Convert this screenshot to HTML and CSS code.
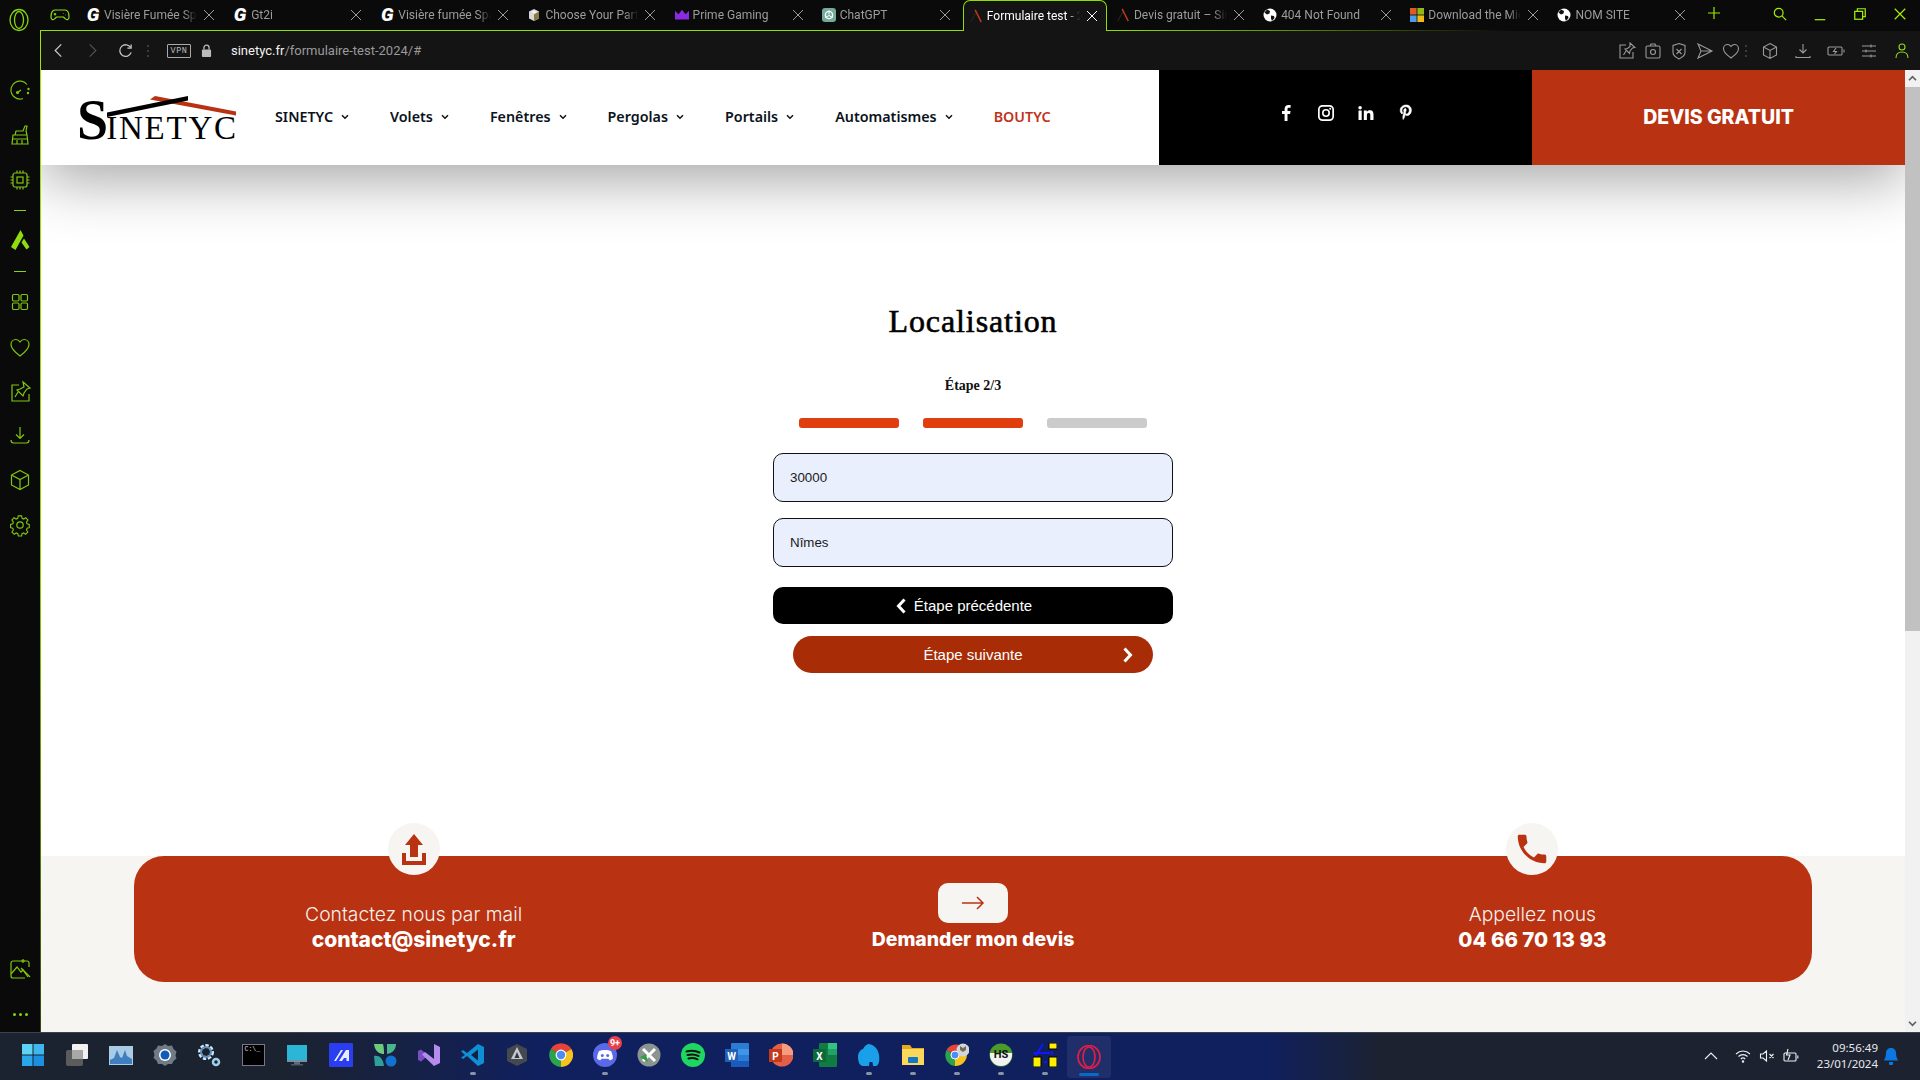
FILE: index.html
```html
<!DOCTYPE html>
<html lang="fr">
<head>
<meta charset="utf-8">
<title>Formulaire test 2024 - Sinetyc</title>
<link rel="stylesheet" href="styles.css">
</head>
<body>
<svg class="defs" width="0" height="0" aria-hidden="true">
  <symbol id="x" viewBox="0 0 12 12"><path d="M1 1l10 10M11 1L1 11" fill="none" stroke="currentColor" stroke-width="1"/></symbol>
  <symbol id="roof" viewBox="0 0 16 16"><path d="M2 15L9 2" stroke="#222" stroke-width="1.5" fill="none"/><path d="M7 1l7 14" stroke="#c5391a" stroke-width="1.6" fill="none"/></symbol>
  <symbol id="globe" viewBox="0 0 14 14"><circle cx="7" cy="7" r="6.5" fill="#fff"/><path d="M4 1.5l3 1.5-.5 2.5-2.5 1-2.5-2zM8 7.5l3 .5.5 2-2.5 3-1-2.5z" fill="#111"/></symbol>
  <symbol id="nav-chev" viewBox="0 0 8 6"><path d="M1 1.2l3 3 3-3" fill="none" stroke="currentColor" stroke-width="1.5"/></symbol>
</svg>
<div class="window">
  <div class="upper">
    <aside class="side">
      <svg class="side-logo" viewBox="0 0 24 24"><ellipse cx="12" cy="12" rx="9" ry="10.5"/><ellipse cx="12" cy="12" rx="4.5" ry="8.5"/></svg>
      <div class="side-list">
        <svg class="ic" viewBox="0 0 24 24"><path d="M19 6.500A9 9 0 1 0 15 20.500"/><path d="M9 15l4-3"/><circle cx="9.500" cy="14.500" r="1"/><circle cx="20.500" cy="11" r=".6"/><circle cx="20" cy="15" r=".6"/></svg>
        <svg class="ic" viewBox="0 0 24 24"><path d="M5 12h14l1 9H4zM7 12l1-4h7l2-5h2l-1 5 1 4M9 21v-4M14 21v-4M4.500 16h15"/></svg>
        <svg class="ic" viewBox="0 0 24 24"><rect x="5" y="5" width="14" height="14" rx="2"/><rect x="9" y="9" width="6" height="6"/><path d="M9 2.500V5M12 2.500V5M15 2.500V5M9 19v2.500M12 19v2.500M15 19v2.500M2.500 9H5M2.500 12H5M2.500 15H5M19 9h2.500M19 12h2.500M19 15h2.500"/></svg>
        <span class="side-dash side-dash-a"></span>
        <svg class="ic ic-fill" viewBox="0 0 24 24"><path d="M12.500 2l3 5.500-8 14.500-4.500-3zM16 10.500l5.500 8.500-3 2.500-5-7z"/></svg>
        <span class="side-dash side-dash-b"></span>
        <svg class="ic" viewBox="0 0 24 24"><rect x="4.500" y="4.500" width="6.500" height="6.500" rx="1.200"/><rect x="13" y="4.500" width="6.500" height="6.500" rx="1.200"/><rect x="4.500" y="13" width="6.500" height="6.500" rx="1.200"/><rect x="13" y="13" width="6.500" height="6.500" rx="1.200"/></svg>
        <svg class="ic" viewBox="0 0 24 24"><path d="M12 21C6 16.500 3 13.500 3 9.500 3 6.500 5.300 4.500 7.800 4.500c1.800 0 3.200 1 4.200 2.500 1-1.500 2.400-2.500 4.200-2.500 2.500 0 4.800 2 4.800 5 0 4-3 7-9 11.500z"/></svg>
        <svg class="ic" viewBox="0 0 24 24"><path d="M11 5H4v16h17v-7"/><path d="M15 2l7 6-3 1-3 4-1 3-6-6 3-1 4-2zM10 12l-3 5"/></svg>
        <svg class="ic ic-dl" viewBox="0 0 24 24"><path d="M12 4v11M8 11.500l4 4 4-4M3 17c0 2 1 3 2.500 3h13c1.500 0 2.500-1 2.500-3"/></svg>
        <svg class="ic" viewBox="0 0 24 24"><path d="M12 2.500l8.500 4.500v10L12 21.500 3.500 17V7zM3.500 7l8.500 4.500L20.500 7M12 11.500v10"/></svg>
        <svg class="ic" viewBox="0 0 24 24"><circle cx="12" cy="12" r="3.200"/><path d="M10.200 3.500h3.600l.5 2.600 1.700.8 2.300-1.400 2.300 2.600-1.600 2.100.6 1.800 2.400.8v3.400l-2.400.7-.6 1.800 1.500 2.100-2.400 2.500-2.200-1.400-1.700.7-.4 2.500h-3.600l-.5-2.500-1.700-.7-2.200 1.400-2.400-2.500 1.500-2.100-.6-1.800-2.400-.7v-3.400l2.400-.8.6-1.800-1.600-2.100 2.300-2.600 2.300 1.400 1.700-.8z" transform="translate(.8 -.4) scale(.93)"/></svg>
      </div>
      <div class="side-foot">
        <svg class="ic" viewBox="0 0 24 24"><path d="M21 10V6a2 2 0 0 0-2-2H5a2 2 0 0 0-2 2v13a2 2 0 0 0 2 2h12"/><path d="M3 17l6-7 4 5 2-2 5 7"/><path d="M13 11l9 9"/><path d="M15 2v4M13 4h4"/></svg>
        <div class="side-dots"><i></i><i></i><i></i></div>
      </div>
    </aside>
    <div class="browser">
      <div class="tabbar">
        <svg class="game" viewBox="0 0 20 14"><path d="M5 2h10c2.500 0 4 3 4 7 0 3-2.500 3.500-4 1.500L13.500 9h-7L5 10.500C3.500 12.500 1 12 1 9c0-4 1.500-7 4-7z"/><path d="M5 5v2.500M3.800 6.200h2.400M13 5.500h.5M15 7h.5"/></svg>
        <div class="tab"><span class="fav-g">G</span><span class="tab-title">Visière Fumée Spa</span><svg class="tab-x"><use href="#x"/></svg></div>
        <div class="tab"><span class="fav-g">G</span><span class="tab-title">Gt2i</span><svg class="tab-x"><use href="#x"/></svg></div>
        <div class="tab"><span class="fav-g">G</span><span class="tab-title">Visière fumée Spa</span><svg class="tab-x"><use href="#x"/></svg></div>
        <div class="tab"><svg class="fav" viewBox="0 0 14 14"><path d="M7 1l5 2.500v7L7 13l-5-2.500v-7z" fill="#d8d8d8"/><path d="M7 6.500l5-3v7L7 13z" fill="#8a7a45"/><path d="M4 4l3-1.500L10 4 7 5.500z" fill="#f4f4f4"/></svg><span class="tab-title">Choose Your Parts</span><svg class="tab-x"><use href="#x"/></svg></div>
        <div class="tab"><svg class="fav" viewBox="0 0 16 14"><path d="M0 2l4 4 4-5 4 5 4-4v10H0z" fill="#8a2be2"/></svg><span class="tab-title">Prime Gaming</span><svg class="tab-x"><use href="#x"/></svg></div>
        <div class="tab"><svg class="fav" viewBox="0 0 14 14"><rect width="14" height="14" rx="3" fill="#74aa9c"/><circle cx="7" cy="7" r="3.600" fill="none" stroke="#fff" stroke-width="1.400"/><path d="M7 2.500v4M3.500 9.500L7 7.500l3.500 2" stroke="#fff" fill="none"/></svg><span class="tab-title">ChatGPT</span><svg class="tab-x"><use href="#x"/></svg></div>
        <div class="tab tab-active"><svg class="fav"><use href="#roof"/></svg><span class="tab-title">Formulaire test - 2024</span><svg class="tab-x"><use href="#x"/></svg></div>
        <div class="tab"><svg class="fav"><use href="#roof"/></svg><span class="tab-title">Devis gratuit – Sinetyc</span><svg class="tab-x"><use href="#x"/></svg></div>
        <div class="tab"><svg class="fav"><use href="#globe"/></svg><span class="tab-title">404 Not Found</span><svg class="tab-x"><use href="#x"/></svg></div>
        <div class="tab"><svg class="fav" viewBox="0 0 14 14"><rect width="6.600" height="6.600" fill="#e05a24"/><rect x="7.400" width="6.600" height="6.600" fill="#8fb81a"/><rect y="7.400" width="6.600" height="6.600" fill="#4a9cf0"/><rect x="7.400" y="7.400" width="6.600" height="6.600" fill="#f2bb13"/></svg><span class="tab-title">Download the Microsoft</span><svg class="tab-x"><use href="#x"/></svg></div>
        <div class="tab"><svg class="fav"><use href="#globe"/></svg><span class="tab-title">NOM SITE</span><svg class="tab-x"><use href="#x"/></svg></div>
        <svg class="newtab" viewBox="0 0 12 12"><path d="M6 0v12M0 6h12"/></svg>
        <div class="winctl">
          <svg viewBox="0 0 16 16"><circle cx="6.500" cy="6.500" r="5"/><path d="M10.200 10.200L15 15"/></svg>
          <svg viewBox="0 0 16 16"><path d="M2 14.500h12"/></svg>
          <svg viewBox="0 0 16 16"><rect x="2" y="5" width="9" height="9"/><path d="M5 5V2h9v9h-3"/></svg>
          <svg viewBox="0 0 16 16"><path d="M2 2l12 12M14 2L2 14"/></svg>
        </div>
      </div>
      <div class="frame">
        <div class="addr">
          <svg class="nav-ic nav-back" viewBox="0 0 10 16"><path d="M8.500 1.500L2 8l6.500 6.500"/></svg>
          <svg class="nav-ic nav-fwd" viewBox="0 0 10 16"><path d="M1.500 1.500L8 8l-6.500 6.500"/></svg>
          <svg class="nav-ic nav-reload" viewBox="0 0 16 16"><path d="M13.500 5A6.200 6.200 0 1 0 14 10"/><path d="M14 1.500V5.500h-4"/></svg>
          <span class="addr-dots"></span>
          <span class="vpn">VPN</span>
          <svg class="lock" viewBox="0 0 12 14"><rect x="1" y="6" width="10" height="8" rx="1" fill="#bbb"/><path d="M3.200 6V4a2.800 2.800 0 0 1 5.600 0v2" fill="none" stroke="#bbb" stroke-width="1.400"/></svg>
          <span class="url"><b>sinetyc.fr</b>/formulaire-test-2024/#</span>
          <div class="addr-tools">
            <svg viewBox="0 0 18 18"><path d="M8 3H2v13h13v-6"/><path d="M12 1l5 4.500-2.500.5-2.500 3-.5 2.500-4.500-4.500 2.500-.5 2.500-2zM8 9l-2.500 4"/></svg>
            <svg viewBox="0 0 18 18"><rect x="2" y="4" width="14" height="12" rx="1.500"/><path d="M6 4l1-2h4l1 2"/><circle cx="9" cy="10" r="2.500"/></svg>
            <svg viewBox="0 0 18 18"><path d="M9 1.500l6 2v7c0 3-3 5-6 6.500-3-1.500-6-3.500-6-6.500v-7z"/><path d="M6.500 7l5 5M11.500 7l-5 5"/></svg>
            <svg viewBox="0 0 18 18"><path d="M2 2l14 7-14 7 3-7zM5 9h11"/></svg>
            <svg viewBox="0 0 18 18"><path d="M9 16C4 12 1.500 10 1.500 6.500 1.500 4 3.500 2.500 5.500 2.500 7 2.500 8.200 3.300 9 4.500c.8-1.200 2-2 3.500-2 2 0 4 1.500 4 4C16.500 10 14 12 9 16z"/></svg>
            <span class="addr-dots addr-dots-r"></span>
            <svg class="tool-wide" viewBox="0 0 18 18"><path d="M9 1.500l6.500 3.500v8L9 16.500 2.500 13V5zM2.500 5L9 8.500 15.500 5M9 8.500v8"/></svg>
            <svg class="tool-wide" viewBox="0 0 18 18"><path d="M9 2v9M5.500 7.500L9 11l3.500-3.500M2 14v1.500h14V14"/></svg>
            <svg class="tool-wide" viewBox="0 0 18 18"><rect x="1" y="5" width="14" height="8" rx="1"/><path d="M17 7.500v3M9 6L6.500 9.500h3L7.500 12"/></svg>
            <svg class="tool-wide" viewBox="0 0 18 18"><path d="M2 4h14M2 9h14M2 14h14M11 2.500v3M6 7.500v3M11 12.500v3"/></svg>
            <svg class="tool-wide tool-user" viewBox="0 0 18 18"><circle cx="9" cy="5" r="3"/><path d="M3 16c0-4 2.500-6 6-6s6 2 6 6"/></svg>
          </div>
        </div>
        <div class="content">
          <div class="page">
            <header class="site-header">
              <div class="brand">
                <a class="logo"><span class="logo-s">S</span><span class="logo-rest">INETYC</span>
                  <svg class="logo-roof" viewBox="0 0 158 22"><path d="M77 0l81 15.500v4L72 3.500z" fill="#b93211"/><path d="M29 16.500L110 0v4.500L29 21z" fill="#000"/></svg>
                </a>
                <nav class="menu">
                  <a class="menu-item">SINETYC<svg class="chev"><use href="#nav-chev"/></svg></a>
                  <a class="menu-item">Volets<svg class="chev"><use href="#nav-chev"/></svg></a>
                  <a class="menu-item">Fenêtres<svg class="chev"><use href="#nav-chev"/></svg></a>
                  <a class="menu-item">Pergolas<svg class="chev"><use href="#nav-chev"/></svg></a>
                  <a class="menu-item">Portails<svg class="chev"><use href="#nav-chev"/></svg></a>
                  <a class="menu-item">Automatismes<svg class="chev"><use href="#nav-chev"/></svg></a>
                  <a class="menu-item menu-shop">BOUTYC</a>
                </nav>
              </div>
              <div class="social">
                <svg viewBox="0 0 18 18"><path d="M10.500 17V10h2.600l.4-3h-3V5.200c0-.9.3-1.400 1.500-1.400h1.600V1.100C13.300 1 12.400 1 11.500 1 9.200 1 7.600 2.400 7.600 4.900V7H5v3h2.600v7z"/></svg>
                <svg viewBox="0 0 18 18"><path fill-rule="evenodd" d="M5.500 1h7A4.500 4.500 0 0 1 17 5.500v7a4.500 4.500 0 0 1-4.500 4.500h-7A4.500 4.500 0 0 1 1 12.500v-7A4.500 4.500 0 0 1 5.500 1zm0 1.700A2.800 2.800 0 0 0 2.700 5.500v7a2.800 2.800 0 0 0 2.800 2.800h7a2.800 2.800 0 0 0 2.800-2.800v-7a2.800 2.800 0 0 0-2.800-2.800zM9 5a4 4 0 1 1 0 8 4 4 0 0 1 0-8zm0 1.600a2.400 2.400 0 1 0 0 4.800 2.400 2.400 0 0 0 0-4.800zM13.200 3.800a1 1 0 1 1 0 2 1 1 0 0 1 0-2z"/></svg>
                <svg viewBox="0 0 18 18"><path d="M1.500 6.500h3.200V16H1.500zM3.100 2a1.800 1.800 0 1 1 0 3.600 1.800 1.800 0 0 1 0-3.600zM6.800 6.500h3v1.300c.5-.9 1.600-1.600 3-1.600 3 0 3.700 2 3.700 4.700V16h-3.200v-4.500c0-1.200 0-2.600-1.600-2.600s-1.800 1.200-1.800 2.500V16H6.800z"/></svg>
                <svg viewBox="2 0 14 18"><path d="M9.300 1C5.300 1 3.200 3.600 3.200 6.400c0 1.300.7 3 1.800 3.500.2.100.3 0 .4-.2l.3-1c0-.2 0-.3-.1-.4-.4-.5-.7-1.200-.7-1.900 0-1.900 1.400-3.600 3.900-3.600 2.100 0 3.500 1.300 3.500 3.300 0 2.300-1.100 3.900-2.600 3.900-.8 0-1.400-.7-1.200-1.500.2-1 .7-2 .7-2.700 0-.7-.3-1.200-1-1.200-.8 0-1.500.9-1.500 2 0 .7.300 1.200.3 1.200l-1 4.200c-.3 1.200 0 3.200 0 3.400 0 .1.100.1.200 0 .1-.1 1.100-1.500 1.500-2.800l.5-2c.3.500 1 1 1.900 1 2.500 0 4.300-2.400 4.300-5.300C14.400 3 12.300 1 9.300 1z" stroke="#fff" stroke-width=".6"/></svg>
              </div>
              <a class="quote">DEVIS GRATUIT</a>
            </header>
            <main class="form-zone">
              <h1 class="form-title">Localisation</h1>
              <p class="form-step">Étape 2/3</p>
              <div class="bars"><span class="bar bar-on"></span><span class="bar bar-on"></span><span class="bar"></span></div>
              <div class="field">30000</div>
              <div class="field">Nîmes</div>
              <a class="btn btn-prev"><svg class="btn-chev" viewBox="0 0 10 16"><path d="M8.500 1.500L2.500 8l6 6.500"/></svg>Étape précédente</a>
              <a class="btn btn-next"><span></span><span>Étape suivante</span><svg class="btn-chev" viewBox="0 0 10 16"><path d="M1.500 1.500l6 6.500-6 6.500"/></svg></a>
            </main>
            <section class="cta-band">
              <div class="cta">
                <div class="cta-col">
                  <span class="cta-badge"><svg viewBox="0 0 26 32"><path d="M13 1l9 11h-5v12H9V12H4zM1 20h4v8h16v-8h4v12H1z"/></svg></span>
                  <span class="cta-light">Contactez nous par mail</span>
                  <strong class="cta-strong cta-mail">contact@sinetyc.fr</strong>
                </div>
                <div class="cta-col">
                  <span class="cta-arrow"><svg viewBox="0 0 24 14"><path d="M1 7h21M16 1l6 6-6 6"/></svg></span>
                  <strong class="cta-strong cta-quote">Demander mon devis</strong>
                </div>
                <div class="cta-col">
                  <span class="cta-badge"><svg viewBox="0 0 24 24"><path d="M6.620 10.790c1.440 2.830 3.760 5.140 6.590 6.590l2.200-2.200c.27-.27.67-.36 1.020-.24 1.120.37 2.330.57 3.570.57.55 0 1 .45 1 1V20c0 .55-.45 1-1 1-9.390 0-17-7.610-17-17 0-.55.45-1 1-1h3.500c.55 0 1 .45 1 1 0 1.250.2 2.450.57 3.570.11.350.03.740-.25 1.020l-2.200 2.200z"/></svg></span>
                  <span class="cta-light">Appellez nous</span>
                  <strong class="cta-strong cta-phone">04 66 70 13 93</strong>
                </div>
              </div>
            </section>
          </div>
          <div class="scrollbar">
            <span class="sb-btn"><svg viewBox="0 0 10 8"><path d="M1 6l4-4 4 4"/></svg></span>
            <span class="sb-thumb"></span>
            <span class="sb-btn sb-down"><svg viewBox="0 0 10 8"><path d="M1 2l4 4 4-4"/></svg></span>
          </div>
        </div>
      </div>
    </div>
  </div>
  <footer class="taskbar">
    <div class="task-list">
      <span class="task"><svg viewBox="0 0 24 24"><rect x="1" y="1" width="10.500" height="10.500" fill="#5ed3f5"/><rect x="12.500" y="1" width="10.500" height="10.500" fill="#3fb6ee"/><rect x="1" y="12.500" width="10.500" height="10.500" fill="#2aa6ea"/><rect x="12.500" y="12.500" width="10.500" height="10.500" fill="#1c8fe0"/></svg></span>
      <span class="task"><svg viewBox="0 0 24 24"><rect x="1" y="7" width="17" height="16" rx="2" fill="#5b5b5b"/><rect x="7" y="1" width="16" height="15" rx="1" fill="#f2f2f2"/><rect x="7" y="7" width="11" height="9" fill="#a8a8a8"/></svg></span>
      <span class="task"><svg viewBox="0 0 24 24"><rect y="3" width="24" height="19" fill="#a9cbe6"/><path d="M1 17l4-2 3-8 3 7 2 1 3-8 2 6 5 3v5H1z" fill="#3f7fc0"/></svg></span>
      <span class="task"><svg viewBox="0 0 24 24"><path d="M12 1l3 2 4-.5 1.500 3.500 3 2.500-1 4 1 3-3 2.500L19 21l-4 0-3 2-3-2-4 0-1.500-3.500L.5 15l1-3-1-4 3-2.500L5 2.500 9 3z" fill="#717b86"/><circle cx="12" cy="12" r="6" fill="#fff"/><circle cx="12" cy="12" r="4.500" fill="#0d5cb5"/></svg></span>
      <span class="task"><svg viewBox="0 0 24 24"><circle cx="9" cy="9" r="6" fill="none" stroke="#d8e8f4" stroke-width="4" stroke-dasharray="3 1.500"/><circle cx="9" cy="9" r="5" fill="none" stroke="#5a8fc0" stroke-width="2"/><circle cx="19" cy="19" r="3" fill="none" stroke="#9fd0e8" stroke-width="2.500"/></svg></span>
      <span class="task"><span class="term">C:\_</span></span>
      <span class="task"><svg viewBox="0 0 24 24"><rect x="2" y="2" width="20" height="15" fill="#2cb6d6"/><rect x="2" y="17" width="20" height="2" fill="#7a8da0"/><rect x="9" y="19" width="6" height="2" fill="#5a6a78"/><rect x="6" y="21" width="12" height="1.500" fill="#4a5a68"/></svg></span>
      <span class="task"><svg viewBox="0 0 24 24"><rect width="24" height="24" rx="1" fill="#2b3df0"/><path d="M5 18L12 7h2L7 18zM10 18l7-11h3v11h-2.500v-3H15l-2 3z" fill="#e8ecff"/></svg></span>
      <span class="task"><svg viewBox="0 0 24 24"><path d="M1 1h9c1 4 1 7 1 10-4 0-9-2-10-10z" fill="#6ecb7c"/><path d="M14 1h9c0 5-3 9-9 10z" fill="#49b58f"/><path d="M1 13c5-1 9 2 10 10H2z" fill="#2f9f9a"/><circle cx="18" cy="18" r="5.500" fill="#1272d0"/></svg></span>
      <span class="task"><svg viewBox="0 0 24 24"><path d="M1 8l3-1.500 7 6-7 6L1 17z" fill="#7c4ec4"/><path d="M17 1l6 3v16l-6 3-12-11.500L8 9l9 7z" fill="#b58bef"/></svg></span>
      <span class="task is-run"><svg viewBox="0 0 24 24"><path d="M17 1l6 3v16l-6 3-11-10-4 3-2-1.500L4 12 0 8.500 2 7l4 3z" fill="#0e8fd6"/><path d="M17 6.500L10 12l7 5.500z" fill="#12213f"/></svg></span>
      <span class="task"><svg viewBox="0 0 24 24"><path d="M12 1l10 5v12l-10 5L2 18V6z" fill="#44494e"/><path d="M12 4l-6 12h12z" fill="#c4cad0"/><path d="M12 9l-2.500 6h5z" fill="#33383d"/></svg></span>
      <span class="task"><svg viewBox="0 0 24 24"><path d="M12 12L1.800 6A12 12 0 0 1 22.400 6z" fill="#e6433a"/><path d="M12 12l10.400-6A12 12 0 0 1 12 24z" fill="#f7c31e"/><path d="M12 12v12A12 12 0 0 1 1.800 6z" fill="#2ba24c"/><circle cx="12" cy="12" r="5.400" fill="#fff"/><circle cx="12" cy="12" r="4.200" fill="#4a8df6"/></svg></span>
      <span class="task is-run"><svg viewBox="0 0 24 24"><circle cx="12" cy="12" r="12" fill="#5a68ea"/><path d="M6 8c3-1.500 9-1.500 12 0 1.500 3 2 5.500 1.800 8-1.500 1-2.500 1.300-3.300 1.300l-1-1.500H8.500l-1 1.500c-.8 0-1.800-.3-3.300-1.300C4 13.500 4.500 11 6 8z" fill="#fff"/><circle cx="9.300" cy="12.500" r="1.500" fill="#5a68ea"/><circle cx="14.700" cy="12.500" r="1.500" fill="#5a68ea"/></svg><span class="badge">9+</span></span>
      <span class="task"><svg viewBox="0 0 24 24"><circle cx="12" cy="12" r="11.500" fill="#8a9490"/><path d="M6 6l12 12M18 6L6 18" stroke="#fff" stroke-width="3"/><path d="M3 14l6-3 2 8z" fill="#2fa040"/></svg></span>
      <span class="task"><svg viewBox="0 0 24 24"><circle cx="12" cy="12" r="12" fill="#1ed760"/><path d="M5.500 8.500c4.500-1.300 9-1 13 1M6.500 12c3.800-1 7.500-.8 11 1M7.500 15.500c3-.8 6-.6 9 .8" fill="none" stroke="#111" stroke-width="2" stroke-linecap="round"/></svg></span>
      <span class="task"><svg viewBox="0 0 24 24"><rect x="6" width="18" height="24" rx="1" fill="#2b7cd3"/><rect x="6" y="6" width="18" height="6" fill="#3f96e8"/><rect x="6" y="18" width="18" height="6" fill="#185abd"/><rect y="6" width="13" height="13" fill="#1f5fb8"/><text class="ms-letter" x="6.500" y="16.500">W</text></svg></span>
      <span class="task"><svg viewBox="0 0 24 24"><circle cx="13" cy="12" r="11.500" fill="#e2604a"/><path d="M13 .5A11.500 11.500 0 0 1 24.500 12H13z" fill="#f49d7f"/><rect y="6" width="13" height="13" fill="#c4391b"/><text class="ms-letter" x="6.500" y="16.500">P</text></svg></span>
      <span class="task"><svg viewBox="0 0 24 24"><rect x="6" width="18" height="24" rx="1" fill="#107c41"/><rect x="15" width="9" height="6" fill="#33c481"/><rect x="15" y="6" width="9" height="6" fill="#21a366"/><rect x="15" y="12" width="9" height="6" fill="#107c41"/><rect y="6" width="13" height="13" fill="#0b6a38"/><text class="ms-letter" x="6.500" y="16.500">X</text></svg></span>
      <span class="task is-run"><svg viewBox="0 0 24 24"><path d="M11 1c5 0 10 4 11 11s-1 11-3 11h-3l-.5-4-3 0-.5 4H6c-3 0-5-4-5-9 0-4 2-7 5-8l2-3z" fill="#1aa0e8"/></svg></span>
      <span class="task is-run"><svg viewBox="0 0 24 24"><path d="M1 2h8l2 3h12v4H1z" fill="#e5a91f"/><rect x="1" y="6" width="22" height="16" fill="#fbd75b"/><rect x="7" y="14" width="10" height="6" rx="1" fill="#1478c8"/></svg></span>
      <span class="task is-run"><svg viewBox="0 0 24 24"><path d="M10 12L1.500 7A11 11 0 0 1 20 6z" fill="#e6433a"/><path d="M10 12l10-6A11 11 0 0 1 10 23z" fill="#f7c31e"/><path d="M10 12v11A11 11 0 0 1 1.500 7z" fill="#2ba24c"/><circle cx="10" cy="12" r="4" fill="#4a8df6" stroke="#fff"/><circle cx="18" cy="7" r="6.500" fill="#cfd6dc"/><path d="M15 3v4l3 2 3-2V3l-3 2z" fill="#776a55"/></svg></span>
      <span class="task is-run"><svg viewBox="0 0 24 24"><circle cx="12" cy="12" r="11.500" fill="#4c9a2a"/><path d="M1 10h22v2a11 11 0 0 1-22 0z" fill="#f2f2f2"/></svg><span class="hs">HS</span></span>
      <span class="task is-run"><svg viewBox="0 0 24 24"><rect y="14" width="8" height="10" fill="#ffee00" stroke="#000"/><rect x="16" y="14" width="8" height="10" fill="#ffee00" stroke="#000"/><rect x="16" y="0" width="8" height="6" fill="#ffee00" stroke="#000"/><path d="M1 10h16M3 12l7-11M11 19h3M19 8v4" stroke="#1414ff" stroke-width="2"/><circle cx="3" cy="11" r="1.500" fill="#1414ff"/></svg></span>
      <span class="task task-active"><svg viewBox="0 0 24 24"><ellipse cx="12" cy="12" rx="11" ry="11.500" fill="none" stroke="#e11d48" stroke-width="1.700"/><ellipse cx="12" cy="12" rx="6" ry="10" fill="none" stroke="#e11d48" stroke-width="1.700"/></svg></span>
    </div>
    <div class="tray">
      <svg class="tray-ic" viewBox="0 0 16 16"><path d="M2 11l6-6 6 6"/></svg>
      <svg class="tray-ic" viewBox="0 0 16 16"><path d="M1 6c4-4 10-4 14 0M3.500 8.500c2.500-2.500 6.500-2.500 9 0M5.800 11c1.200-1.200 3.200-1.200 4.400 0"/><circle cx="8" cy="13.500" r=".7"/></svg>
      <svg class="tray-ic" viewBox="0 0 16 16"><path d="M1.500 6v4H4l3.500 3V3L4 6zM10.500 6l4 4M14.500 6l-4 4"/></svg>
      <svg class="tray-ic" viewBox="0 0 16 16"><rect x="1" y="5" width="12" height="8" rx="1"/><path d="M14.800 7.500v3M5 1L3.500 7H7l-2 5" /></svg>
      <div class="clock"><span>09:56:49</span><span>23/01/2024</span></div>
      <svg class="bell" viewBox="0 0 16 18"><path d="M8 1c-3 0-5 2-5 5 0 4-1.500 6-2 7.500h14C14.500 12 13 10 13 6c0-3-2-5-5-5z"/><path d="M6 15h4v1.500a2 2 0 0 1-4 0z"/></svg>
    </div>
  </footer>
</div>
</body>
</html>
```
FILE: styles.css
```css
* { box-sizing: border-box; }
html, body { margin: 0; height: 100%; overflow: hidden; }
body { font-family: "Liberation Sans", Arial, sans-serif; background: #000; }
.defs { position: absolute; }
a { color: inherit; text-decoration: none; }

.window { width: 1920px; height: 1080px; display: grid; grid-template-rows: 1032px 48px; }
.upper { display: flex; min-height: 0; }

/* sidebar */
.side { width: 40px; flex: none; background: #0a0a0a; display: flex; flex-direction: column; align-items: center; padding: 8px 0 6px; }
.side-logo { width: 24px; height: 24px; fill: none; stroke: #86d40b; stroke-width: 1.300; margin-left: -2px; }
.side-list { display: flex; flex-direction: column; align-items: center; gap: 21px; margin-top: 46px; }
.ic { width: 24px; height: 24px; flex: none; fill: none; stroke: #7fc80c; stroke-width: 1.200; display: block; }
.ic-fill { fill: #8fdc10; stroke: none; }
.ic-dl { margin-top: -2px; }
.side-dash { width: 12px; height: 1px; background: #86d40b; }
.side-dash-a { margin: -3px 0 -4px; }
.side-dash-b { margin: -2px 0 -3px; }
.side-foot { margin-top: auto; display: flex; flex-direction: column; align-items: center; gap: 21px; }
.side-dots { height: 24px; display: flex; align-items: center; gap: 3px; }
.side-dots i { width: 3px; height: 3px; border-radius: 50%; background: #86d40b; }

/* browser chrome */
.browser { flex: 1; min-width: 0; display: flex; flex-direction: column; }
.tabbar { height: 31px; flex: none; display: flex; align-items: flex-end; padding-left: 10px; position: relative;
  background: linear-gradient(90deg, #8fe000 0, #8fe000 57%, #5f9400 66%, transparent 78%) left bottom / 100% 1px no-repeat, #0a0a0a; }
.game { width: 20px; height: 14px; flex: none; margin: 0 10px 9px 0; fill: none; stroke: #8fdc10; stroke-width: 1.200; }
.tab { width: 144px; height: 31px; flex: none; margin-right: 3.150px; padding: 0 9px 1px 6px; display: flex; align-items: center; color: #9c9c9c; font: 12px Roboto, sans-serif; }
.tab-active { background: #141414; border: 1px solid #8fe000; border-bottom: 0; border-radius: 7px 7px 0 0; padding: 0 8px 0 5px; color: #fff; }
.fav, .fav-g { width: 14px; height: 14px; flex: none; margin-right: 4px; }
.fav-g { color: #fff; font: italic 900 19px/14px Roboto, sans-serif; text-align: center; }
.tab-title { flex: 1; min-width: 0; overflow: hidden; white-space: nowrap; margin-right: 4px;
  -webkit-mask-image: linear-gradient(90deg, #000 84%, transparent 98%); mask-image: linear-gradient(90deg, #000 84%, transparent 98%); }
.tab-x { width: 12px; height: 12px; flex: none; color: #9c9c9c; }
.tab-active .tab-x { color: #fff; }
.newtab { width: 12px; height: 12px; flex: none; margin: 0 9px 12px 9px; fill: none; stroke: #9be800; stroke-width: 1.200; }
.winctl { margin-left: auto; display: flex; height: 30px; align-self: flex-start; }
.winctl svg { width: 40px; height: 14px; margin-top: 7px; fill: none; stroke: #a4f000; stroke-width: 1.400; }

.frame { flex: 1; min-height: 0; display: flex; flex-direction: column; border-left: 1px solid; border-image: linear-gradient(#9be800, #86d000 55%, #30480f) 1; }
.addr { height: 39px; flex: none; background: #141414; display: flex; align-items: center; color: #bbb; }
.nav-ic { flex: none; fill: none; stroke: #c4c4c4; stroke-width: 1.400; }
.nav-back { width: 10px; height: 15px; margin-left: 12px; }
.nav-fwd { width: 10px; height: 15px; margin-left: 25px; stroke: #4f4f4f; }
.nav-reload { width: 15px; height: 15px; margin-left: 20px; }
.addr-dots { width: 2px; height: 12px; flex: none; margin-left: 14px; background: repeating-linear-gradient(#3c3c3c 0 2px, transparent 2px 5px); }
.addr-dots-r { margin: 0 6px 0 -3px; }
.vpn { flex: none; width: 24px; height: 14px; margin-left: 18px; border: 1px solid #aaa; border-radius: 1px; color: #bbb; font: 8.500px/12px "Liberation Mono", monospace; letter-spacing: .5px; text-align: center; }
.lock { width: 11px; height: 13px; margin-left: 10px; flex: none; }
.url { margin-left: 19px; font: 13px Roboto, sans-serif; color: #9a9a9a; }
.url b { font-weight: 400; color: #f2f2f2; }
.addr-tools { margin-left: auto; margin-right: 9px; display: flex; align-items: center; gap: 8px; }
.addr-tools svg { width: 18px; height: 18px; flex: none; fill: none; stroke: #9a9a9a; stroke-width: 1.100; }
.addr-tools .tool-wide { margin-right: 7px; }
.addr-tools .tool-user { stroke: #8fdc10; margin-right: 0; }

.content { flex: 1; min-height: 0; display: flex; }
.page { flex: 1; min-width: 0; background: #fff; display: flex; flex-direction: column; overflow: hidden; }

/* site header */
.site-header { height: 95px; flex: none; display: grid; grid-template-columns: 60% 20% 20%; background: #fff; box-shadow: 0 14px 60px rgba(0, 0, 0, .36); position: relative; }
.brand { display: flex; align-items: center; padding-left: 36px; gap: 39px; }
.logo { width: 159px; height: 45px; flex: none; position: relative; display: flex; align-items: baseline; color: #000; font-family: "Liberation Serif", serif; padding-top: 5px; line-height: 41px; }
.logo-s { font-size: 56px; font-weight: 700; }
.logo-rest { font-size: 33px; letter-spacing: 1.800px; margin-left: -2px; }
.logo-roof { position: absolute; left: 1px; top: 1px; width: 158px; height: 22px; }
.menu { display: flex; align-items: center; gap: 41px; padding-bottom: 2px; }
.menu-item { display: flex; align-items: center; gap: 8px; color: #0b1220; font: 600 14.300px "Noto Sans", sans-serif; white-space: nowrap; }
.chev { width: 8px; height: 6px; color: #111; }
.menu-shop { color: #c2321a; }
.social { background: #000; display: flex; justify-content: center; align-items: center; gap: 22px; padding: 0 0 10px 1px; }
.social svg { width: 18px; height: 18px; fill: #fff; }
.quote { background: #b93211; color: #fff; display: flex; align-items: center; justify-content: center; font: 800 19.500px Inter, sans-serif; padding-bottom: 2px; }

/* form */
.form-zone { flex: 1; min-height: 0; display: flex; flex-direction: column; align-items: center; padding-top: 136px; }
.form-title { margin: 0 0 1px; height: 40px; font: 400 32px/40px "Liberation Serif", serif; letter-spacing: .9px; -webkit-text-stroke: .6px #000; color: #000; }
.form-step { margin: 36px 0 0; height: 16px; font: 700 14px/16px "Liberation Serif", serif; color: #111; }
.bars { display: flex; gap: 24px; margin-top: 24px; }
.bar { width: 100px; height: 10px; border-radius: 3px; background: #cbcbcb; }
.bar-on { background: #e03e0e; }
.field { width: 400px; height: 49px; margin-top: 16px; padding-left: 16px; display: flex; align-items: center; border: 1px solid #111; border-radius: 10px; background: #e9effd; color: #1a1a1a; font-size: 13.330px; }
.bars + .field { margin-top: 25px; }
.btn { height: 37px; display: flex; align-items: center; justify-content: center; color: #fff; font-size: 15px; flex: none; }
.btn-chev { width: 10px; height: 16px; fill: none; stroke: #fff; stroke-width: 3; }
.btn-prev { width: 400px; margin-top: 20px; background: #000; border-radius: 10px; gap: 8px; }
.btn-prev .btn-chev { margin-left: -18px; }
.btn-next { width: 360px; margin-top: 12px; background: #a82c06; border-radius: 19px; display: grid; grid-template-columns: 1fr auto 1fr; padding: 0 20px; }
.btn-next .btn-chev { justify-self: end; }

/* call to action */
.cta-band { height: 176px; flex: none; background: #f6f5f1; padding: 0 93px; }
.cta { height: 126px; border-radius: 30px; background: #b93211; display: grid; grid-template-columns: repeat(3, 1fr); color: #fff; }
.cta-col { position: relative; display: flex; flex-direction: column; align-items: center; justify-content: flex-end; padding-bottom: 30px; }
.cta-light { font: 300 19.300px/26px Inter, sans-serif; color: #f6f1ee; }
.cta-strong { font: 800 19.400px/25px Inter, sans-serif; }
.cta-mail { font-size: 21px; }
.cta-phone { font-size: 20.400px; }
.cta-badge { position: absolute; top: -33px; left: 50%; width: 52px; height: 52px; margin-left: -26px; border-radius: 50%; background: #f6f5f1; display: flex; align-items: center; justify-content: center; }
.cta-badge svg { width: 26px; height: 32px; fill: #b93211; }
.cta-col:last-child .cta-badge svg { width: 38px; height: 38px; }
.cta-arrow { width: 70px; height: 40px; margin-bottom: 4px; border-radius: 10px; background: #f6f5f1; display: flex; align-items: center; justify-content: center; }
.cta-arrow svg { width: 24px; height: 14px; fill: none; stroke: #b93211; stroke-width: 1.500; }

/* scrollbar */
.scrollbar { width: 15px; flex: none; background: #f1f1f1; display: flex; flex-direction: column; position: relative; z-index: 2; }
.sb-btn { height: 17px; flex: none; display: flex; align-items: center; justify-content: center; }
.sb-btn svg { width: 9px; height: 7px; fill: none; stroke: #606060; stroke-width: 2; }
.sb-thumb { height: 544px; background: #c1c1c1; }
.sb-down { margin-top: auto; }

/* taskbar */
.taskbar { display: flex; align-items: stretch; border-top: 1px solid #3a4150; padding-left: 11px;
  background: linear-gradient(90deg, #1b2230 0, #1b2230 15%, #10205e 28%, #10205e 66%, #1c2230 72%); }
.task-list { display: flex; align-items: stretch; }
.task { width: 44px; position: relative; display: flex; align-items: center; justify-content: center; padding-bottom: 3px; flex: none; }
.task > svg { width: 24px; height: 24px; display: block; }
.is-run::after { content: ""; position: absolute; left: 19px; bottom: 5px; width: 6px; height: 3px; border-radius: 2px; background: #8a93a6; }
.task-active { background: rgba(255, 255, 255, .07); border-radius: 4px; margin: 3px 0 2px; padding-bottom: 1px; }
.task-active::after { content: ""; position: absolute; left: 12px; bottom: 2px; width: 20px; height: 3px; border-radius: 2px; background: #0a6ac8; }
.badge { position: absolute; left: 25px; top: 3px; width: 14px; height: 14px; border-radius: 50%; background: #e8404a; color: #fff; font: 700 9px/14px Roboto, sans-serif; text-align: center; }
.hs { position: absolute; left: 0; right: 0; top: 15px; text-align: center; color: #111; font: 700 11px/14px Roboto, sans-serif; }
.term { width: 23px; height: 22px; border: 1px solid #778; background: #000; color: #ddd; font: 6.500px/9px "Liberation Mono", monospace; padding-left: 2px; }
.ms-letter { fill: #fff; font: 700 10px Roboto, sans-serif; text-anchor: middle; }
.tray { margin-left: auto; display: flex; align-items: center; padding-right: 21px; padding-bottom: 1px; }
.tray-ic { width: 16px; height: 16px; margin-right: 8px; fill: none; stroke: #eef0f4; stroke-width: 1.100; }
.tray-ic:first-child { margin-right: 16px; }
.tray-ic:nth-child(4) { margin-right: 1px; }
.clock { width: 78px; margin-right: 5px; display: flex; flex-direction: column; align-items: flex-end; color: #e6e8ee; font: 11.500px/16px "Noto Sans", sans-serif; }
.bell { width: 16px; height: 18px; fill: #0a78e0; }
```
